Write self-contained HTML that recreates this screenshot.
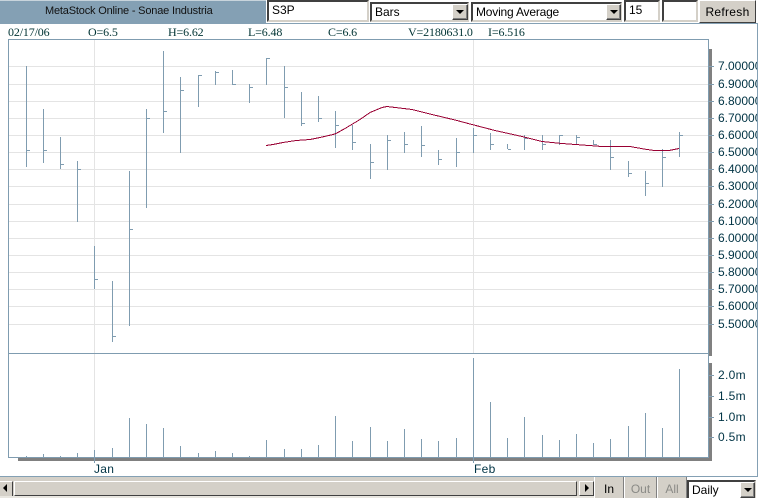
<!DOCTYPE html>
<html><head><meta charset="utf-8"><style>
html,body{margin:0;padding:0;background:#fff;width:764px;height:498px;overflow:hidden}
div{position:absolute;box-sizing:border-box;white-space:nowrap}
.s{font:12px/14px "Liberation Sans",sans-serif;color:#000}
.in{background:#fff;border:2px solid;border-color:#404040 #d4d0c8 #d4d0c8 #404040;padding:1px 0 0 3px}
.ar{background:#d4d0c8;border:1px solid;border-color:#fff #404040 #404040 #fff;box-shadow:inset -1px -1px 0 #808080}
.ar i{position:absolute;left:3px;top:5px;width:0;height:0;border:4px solid transparent;border-top:4px solid #000;border-bottom:0}
.d{font:12px/14px "Liberation Serif",serif;color:#003333;top:25px;letter-spacing:-.15px}
.y{font:12px/14px "Liberation Sans",sans-serif;color:#003344;left:718px;width:39px;overflow:hidden}
.v{font:12px/14px "Liberation Sans",sans-serif;color:#003344;left:718px;letter-spacing:.3px}
.btn{background:#d4d0c8;font:12px/14px "Liberation Sans",sans-serif;text-align:center;top:477px;height:21px;padding-top:5px;border-left:1px solid #fff;border-right:1px solid #808080}
</style></head><body>
<div style="left:0;top:0;width:266px;height:23px;background:#84a0b4;border-top:1px solid #c8d4dc"></div>
<div class="s" style="left:45px;top:4px;color:#111;font-size:11px;letter-spacing:-.18px">MetaStock Online - Sonae Industria</div>
<div style="left:0;top:23px;width:758px;height:1px;background:#84a0b4"></div>
<div style="left:266px;top:0;width:492px;height:23px;background:#fff"></div>
<div class="s in" style="left:267px;top:0;width:102px;height:22px">S3P</div>
<div class="s in" style="left:370px;top:2px;width:99px;height:20px">Bars</div>
<div class="ar" style="left:452px;top:4px;width:16px;height:16px"><i></i></div>
<div class="s in" style="left:471px;top:2px;width:151px;height:20px;letter-spacing:-.2px">Moving Average</div>
<div class="ar" style="left:606px;top:4px;width:15px;height:16px"><i></i></div>
<div class="s in" style="left:624px;top:0;width:36px;height:22px">15</div>
<div class="s in" style="left:662px;top:0;width:36px;height:22px"></div>
<div class="s" style="left:699px;top:0;width:57px;height:23px;background:#d4d0c8;border:1px solid;border-color:#fff #404040 #404040 #fff;text-align:center;padding-top:4px;letter-spacing:.3px">Refresh</div>
<div style="left:757px;top:23px;width:1px;height:454px;background:#84a0b4"></div>

<div class="d" style="left:8px">02/17/06</div>
<div class="d" style="left:88px">O=6.5</div>
<div class="d" style="left:168px">H=6.62</div>
<div class="d" style="left:248px">L=6.48</div>
<div class="d" style="left:328px">C=6.6</div>
<div class="d" style="left:408px">V=2180631.0</div>
<div class="d" style="left:488px">I=6.516</div>

<svg style="position:absolute;left:0;top:0" width="764" height="498" shape-rendering="crispEdges" fill="none">
<path stroke="#e4e4e4" d="M9 66.5H708M9 84.5H708M9 101.5H708M9 118.5H708M9 135.5H708M9 152.5H708M9 169.5H708M9 186.5H708M9 204.5H708M9 221.5H708M9 238.5H708M9 255.5H708M9 272.5H708M9 289.5H708M9 306.5H708M9 324.5H708M94.5 40V450M473.5 40V353"/>
<path fill="#808080" d="M709 49h3v307h-3zM709 363h3v98h-3zM18 458h694v3H18z"/>
<path stroke="#7f9cb0" d="M8.5 39V458M8 39.5H709M8 353.5H709M8 457.5H709M708.5 39V458"/>
<path stroke="#7f9cb0" d="M709 66.5h5M709 84.5h5M709 101.5h5M709 118.5h5M709 135.5h5M709 152.5h5M709 169.5h5M709 186.5h5M709 204.5h5M709 221.5h5M709 238.5h5M709 255.5h5M709 272.5h5M709 289.5h5M709 306.5h5M709 324.5h5M709 375.5h5M709 396.5h5M709 417.5h5M709 437.5h5M94.5 457v6M473.5 457v6"/>
<path stroke="#7f9cb0" d="M26.5 66V167M27 150.5h3M43.5 109V163M44 150.5h3M60.5 137V169M61 164.5h3M77.5 161V222M78 169.5h3M94.5 246V289M95 279.5h3M112.5 281V342M113 336.5h3M129.5 171V326M130 229.5h3M146.5 109V208M147 118.5h3M163.5 51V133M164 111.5h3M180.5 77V153M181 90.5h3M198.5 75V107M199 75.5h3M215.5 71V85M216 72.5h3M232.5 70V85M233 84.5h3M249.5 84V103M250 87.5h3M266.5 58V85M267 58.5h3M284.5 66V118M285 87.5h3M301.5 92V126M302 123.5h3M318.5 96V122M319 118.5h3M335.5 111V148M336 125.5h3M352.5 125V150M353 142.5h3M370.5 144V179M371 162.5h3M387.5 135V170M388 140.5h3M404.5 132V153M405 144.5h3M421.5 126V157M422 145.5h3M438.5 150V165M439 159.5h3M456.5 138V167M457 152.5h3M473.5 128V153M474 135.5h3M490.5 133V150M491 144.5h3M507.5 144V149M508 149.5h3M524.5 135V150M525 138.5h3M542.5 135V150M543 144.5h3M559.5 135V145M560 135.5h3M576.5 135V145M577 137.5h3M593.5 140V145M594 144.5h3M610.5 140V170M611 157.5h3M628.5 161V177M629 173.5h3M645.5 171V196M646 183.5h3M662.5 149V187M663 157.5h3M679.5 132V157M680 135.5h3"/>
<path stroke="#7f9cb0" d="M26.5 456V457M43.5 454V457M60.5 456V457M77.5 453V457M94.5 450V457M112.5 448V457M129.5 418V457M146.5 424V457M163.5 428V457M180.5 446V457M198.5 453V457M215.5 451V457M232.5 453V457M249.5 456V457M266.5 440V457M284.5 449V457M301.5 449V457M318.5 445V457M335.5 416V457M352.5 441V457M370.5 427V457M387.5 441V457M404.5 429V457M421.5 439V457M438.5 441V457M456.5 438V457M473.5 358V457M490.5 402V457M507.5 438V457M524.5 417V457M542.5 435V457M559.5 440V457M576.5 434V457M593.5 443V457M610.5 439V457M628.5 426V457M645.5 413V457M662.5 428V457M679.5 369V457"/>
<path stroke="#990033" d="M266 145.5L273 144.5L283 142.5L296 140.5L310 139.5L320 137.5L333 134.5L336 133.5L345 128.5L355 122.5L360 119.5L370 112.5L382 107.5L387 106.5L412 109.5L432 114.5L455 120L472 124.5L495 130.5L522 136.5L542 141.5L562 143.5L589 145.5L602 146.5L630 146.5L644 149L654 150.5L669 150.5L679 148.5"/>
</svg>

<div class="y" style="top:59px">7.00000</div>
<div class="y" style="top:77px">6.90000</div>
<div class="y" style="top:94px">6.80000</div>
<div class="y" style="top:111px">6.70000</div>
<div class="y" style="top:128px">6.60000</div>
<div class="y" style="top:145px">6.50000</div>
<div class="y" style="top:162px">6.40000</div>
<div class="y" style="top:179px">6.30000</div>
<div class="y" style="top:197px">6.20000</div>
<div class="y" style="top:214px">6.10000</div>
<div class="y" style="top:231px">6.00000</div>
<div class="y" style="top:248px">5.90000</div>
<div class="y" style="top:265px">5.80000</div>
<div class="y" style="top:282px">5.70000</div>
<div class="y" style="top:299px">5.60000</div>
<div class="y" style="top:317px">5.50000</div>
<div class="v" style="top:368px">2.0m</div>
<div class="v" style="top:389px">1.5m</div>
<div class="v" style="top:410px">1.0m</div>
<div class="v" style="top:430px">0.5m</div>
<div class="v" style="left:94px;top:462px">Jan</div>
<div class="v" style="left:474px;top:462px">Feb</div>

<div style="left:0;top:476px;width:758px;height:1px;background:#84a0b4"></div>
<div style="left:0;top:477px;width:594px;height:21px;background:#d4d0c8"></div>
<div style="left:0;top:481px;width:13px;height:15px;background:#d4d0c8;border-top:1px solid #fff;border-right:1px solid #404040"></div>
<div style="left:3px;top:484px;width:0;height:0;border:4px solid transparent;border-right:4px solid #000;border-left:0"></div>
<div style="left:14px;top:481px;width:563px;height:15px;background:#d4d0c8;border-top:1px solid #fff;border-left:1px solid #fff;border-right:1px solid #404040;border-bottom:1px solid #404040"></div>
<div style="left:579px;top:481px;width:15px;height:15px;background:#d4d0c8;border:1px solid;border-color:#fff #404040 #404040 #fff"></div>
<div style="left:585px;top:484px;width:0;height:0;border:4px solid transparent;border-left:4px solid #000;border-right:0"></div>
<div style="left:0;top:496px;width:594px;height:2px;background:#e8e6e0"></div>
<div class="btn" style="left:594px;width:30px">In</div>
<div class="btn" style="left:624px;width:33px;color:#8a8a86">Out</div>
<div class="btn" style="left:657px;width:30px;color:#8a8a86">All</div>
<div class="s" style="left:687px;top:477px;width:71px;height:21px;background:#fff"></div>
<div class="s in" style="left:687px;top:480px;width:69px;height:18px;border-bottom:0;padding-top:1px">Daily</div>
<div class="ar" style="left:740px;top:482px;width:15px;height:16px"><i></i></div>
</body></html>
